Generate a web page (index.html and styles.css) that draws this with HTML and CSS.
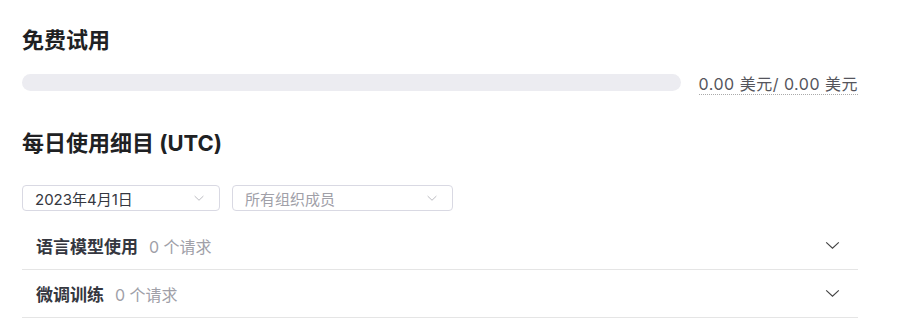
FILE: index.html
```html
<!DOCTYPE html>
<html lang="zh-CN">
<head>
<meta charset="utf-8">
<link rel="stylesheet" href="styles.css">
</head>
<body>
<div class="page">
  <h2 class="title title-trial">免费试用</h2>
  <div class="usage">
    <div class="bar"><div class="bar-fill" style="width:0%"></div></div>
    <span class="amount">0.00 美元/ 0.00 美元</span>
  </div>
  <h2 class="title title-daily">每日使用细目 (UTC)</h2>
  <div class="filters">
    <div class="select">
      <span class="select-value">2023年4月1日</span>
      <svg class="chev-sm" viewBox="0 0 12 8" width="12" height="7"><path d="M1 1.2 L6 6 L11 1.2" fill="none" stroke="#b9b9be" stroke-width="1.1"/></svg>
    </div>
    <div class="select">
      <span class="select-placeholder">所有组织成员</span>
      <svg class="chev-sm" viewBox="0 0 12 8" width="12" height="7"><path d="M1 1.2 L6 6 L11 1.2" fill="none" stroke="#b9b9be" stroke-width="1.1"/></svg>
    </div>
  </div>
  <div class="rows">
    <div class="row">
      <div class="row-label"><span class="row-name">语言模型使用</span><span class="row-count">0 个请求</span></div>
      <svg class="chev" viewBox="0 0 16 10" width="15" height="9"><path d="M1 1.5 L8 8 L15 1.5" fill="none" stroke="#444" stroke-width="1.3"/></svg>
    </div>
    <div class="row">
      <div class="row-label"><span class="row-name">微调训练</span><span class="row-count">0 个请求</span></div>
      <svg class="chev" viewBox="0 0 16 10" width="15" height="9"><path d="M1 1.5 L8 8 L15 1.5" fill="none" stroke="#444" stroke-width="1.3"/></svg>
    </div>
  </div>
</div>
</body>
</html>
```

FILE: styles.css
```css
* { box-sizing: border-box; }
html, body { margin: 0; padding: 0; background: #fff; }
body {
  font-family: Inter, "Noto Sans CJK SC", "Noto Sans", sans-serif;
  color: #202123;
}
.page {
  width: 858px;
  padding: 0 0 0 22px;
}
.title {
  margin: 0;
  font-size: 22px;
  font-weight: 700;
  line-height: 28px;
  color: #202123;
}
.title-trial { padding-top: 26px; }
.usage {
  display: flex;
  align-items: center;
  margin-top: 19px;
  height: 18px;
}
.bar {
  flex: 1;
  height: 17px;
  border-radius: 9px;
  background: #ececf1;
  overflow: hidden;
}
.bar-fill { height: 100%; background: #10a37f; }
.amount {
  margin-left: 18px;
  font-size: 16px;
  letter-spacing: 0.5px;
  color: #55555c;
  line-height: 20px;
  border-bottom: 1px dotted #aaa;
  margin-top: 4px;
  white-space: nowrap;
}
.title-daily { margin-top: 38px; }
.filters {
  display: flex;
  gap: 12px;
  margin-top: 28px;
}
.select {
  width: 198px;
  height: 26px;
  border: 1px solid #d9d9e3;
  border-radius: 4px;
  display: flex;
  align-items: center;
  justify-content: space-between;
  padding: 0 14px 0 12px;
  font-size: 15px;
}
.select + .select { width: 221px; }
.select-value { color: #353740; }
.select-placeholder { color: #a0a0a8; }
.rows { margin-top: 11px; }
.row {
  height: 48px;
  border-bottom: 1px solid #e5e5e5;
  display: flex;
  align-items: center;
  justify-content: space-between;
  padding: 0 18px 0 14px;
}
.row-label { display: flex; align-items: baseline; }
.row-name {
  font-size: 17px;
  font-weight: 700;
  color: #353740;
}
.row-count {
  margin-left: 11px;
  font-size: 16px;
  color: #a0a0a8;
}
.chev { display: block; }
```
